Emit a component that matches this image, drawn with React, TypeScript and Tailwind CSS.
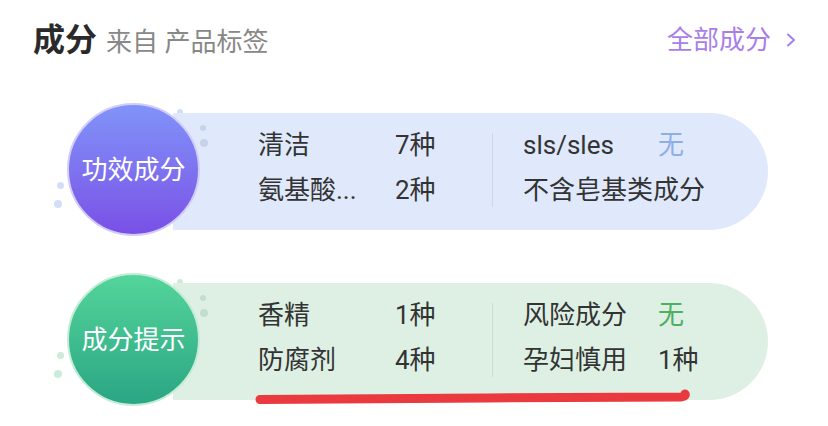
import React from "react";

type Cell = { label: string; value: string; tone?: "blue" | "green" };

type Panel = {
  title: string;
  theme: "purple" | "green";
  left: Cell[];
  right: Cell[];
  underline?: boolean;
};

const PANELS: Panel[] = [
  {
    title: "功效成分",
    theme: "purple",
    left: [
      { label: "清洁", value: "7种" },
      { label: "氨基酸...", value: "2种" },
    ],
    right: [
      { label: "sls/sles", value: "无", tone: "blue" },
      { label: "不含皂基类成分", value: "" },
    ],
  },
  {
    title: "成分提示",
    theme: "green",
    left: [
      { label: "香精", value: "1种" },
      { label: "防腐剂", value: "4种" },
    ],
    right: [
      { label: "风险成分", value: "无", tone: "green" },
      { label: "孕妇慎用", value: "1种" },
    ],
    underline: true,
  },
];

const THEMES = {
  purple: {
    circle: "bg-gradient-to-b from-[#8093f9] to-[#7a4fe6] border-[#d2cdf8]",
    card: "bg-[#dfe9fb]",
    dot: "bg-[#d3def6]",
    divider: "bg-[#c9d7ef]",
  },
  green: {
    circle: "bg-gradient-to-b from-[#54d59b] to-[#29a683] border-[#c4ecd7]",
    card: "bg-[#ddf0e3]",
    dot: "bg-[#cdeadb]",
    divider: "bg-[#c6e0cf]",
  },
} as const;

function valueColour(tone?: Cell["tone"]) {
  if (tone === "blue") return "text-[#8eaeea]";
  if (tone === "green") return "text-[#4caf62]";
  return "text-[#333]";
}

function PanelRow({ panel, top }: { panel: Panel; top: string }) {
  const t = THEMES[panel.theme];
  return (
    <div className={`relative ml-[67px] flex items-start ${top}`}>
      {/* decorative bubbles round the badge */}
      <span className={`absolute left-[110px] top-[6px] h-[6px] w-[6px] rounded-full ${t.dot}`} />
      <span className={`absolute left-[133px] top-[22px] z-20 h-[6px] w-[6px] rounded-full ${t.dot} brightness-95`} />
      <span className={`absolute left-[133px] top-[36px] z-20 h-[8px] w-[8px] rounded-full ${t.dot} brightness-95`} />
      <span className={`absolute left-[-10px] top-[79px] h-[7px] w-[7px] rounded-full ${t.dot}`} />
      <span className={`absolute left-[-13px] top-[97px] h-[8px] w-[8px] rounded-full ${t.dot}`} />

      <div
        className={`relative z-10 flex h-[133px] w-[133px] shrink-0 items-center justify-center rounded-full border-2 ${t.circle}`}
      >
        <span className="text-[26px] leading-none text-white">{panel.title}</span>
      </div>

      <div
        className={`relative -ml-[27px] mt-[10px] flex h-[117px] w-[595px] items-start rounded-r-[58.5px] pl-[85px] pt-[17px] ${t.card}`}
      >
        <div className="grid w-[234px] grid-cols-[137px_1fr] gap-y-[15px]">
          {panel.left.map((c) => (
            <React.Fragment key={c.label}>
              <span className="whitespace-nowrap text-[26px] leading-[30px] text-[#333]">{c.label}</span>
              <span className={`text-[26px] leading-[30px] ${valueColour(c.tone)}`}>{c.value}</span>
            </React.Fragment>
          ))}
        </div>
        <div className={`mt-[3px] h-[74px] w-px ${t.divider}`} />
        <div className="grid grid-cols-[135px_auto] gap-y-[15px] pl-[30px]">
          {panel.right.map((c) =>
            c.value ? (
              <React.Fragment key={c.label}>
                <span className="whitespace-nowrap text-[26px] leading-[30px] text-[#333]">{c.label}</span>
                <span className={`text-[26px] leading-[30px] ${valueColour(c.tone)}`}>{c.value}</span>
              </React.Fragment>
            ) : (
              <span key={c.label} className="col-span-2 whitespace-nowrap text-[26px] leading-[30px] text-[#333]">
                {c.label}
              </span>
            ),
          )}
        </div>

        {panel.underline ? (
          <svg className="absolute left-[82px] top-[106px]" width="436" height="16" viewBox="0 0 436 16">
            <path
              d="M5 10.5 C 120 9, 300 9, 426 8 C 430 7.5, 431 6, 430 5"
              fill="none"
              stroke="#ea3a3f"
              strokeWidth="9"
              strokeLinecap="round"
            />
          </svg>
        ) : null}
      </div>
    </div>
  );
}

export default function App() {
  return (
    <div className="relative h-[426px] w-[828px] overflow-hidden bg-white font-['Roboto','Noto_Sans_CJK_SC',sans-serif]">
      <div className="flex h-[80px] items-center justify-between pl-[33px] pr-[32px]">
        <div className="flex items-baseline">
          <span className="text-[32px] font-bold leading-none text-[#2a2a2a]">成分</span>
          <span className="ml-[9px] text-[26px] leading-none text-[#888]">来自 产品标签</span>
        </div>
        <div className="flex items-center gap-[15px]">
          <span className="text-[26px] leading-none text-[#a87ee8]">全部成分</span>
          <svg width="10" height="14" viewBox="0 0 10 14">
            <path d="M2 1.5 L8 7 L2 12.5" fill="none" stroke="#a87ee8" strokeWidth="2" strokeLinecap="round" strokeLinejoin="round" />
          </svg>
        </div>
      </div>
      <PanelRow panel={PANELS[0]} top="mt-[23px]" />
      <PanelRow panel={PANELS[1]} top="mt-[37px]" />
    </div>
  );
}
